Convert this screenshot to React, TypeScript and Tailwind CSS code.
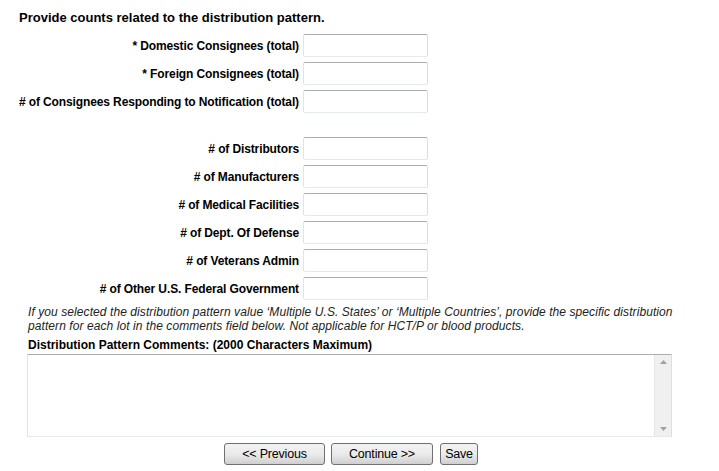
import React from 'react';

const topFields = [
  '* Domestic Consignees (total)',
  '* Foreign Consignees (total)',
  '# of Consignees Responding to Notification (total)',
];

const countFields = [
  '# of Distributors',
  '# of Manufacturers',
  '# of Medical Facilities',
  '# of Dept. Of Defense',
  '# of Veterans Admin',
  '# of Other U.S. Federal Government',
];

function FieldRow({ label }: { label: string }) {
  return (
    <div className="flex items-center h-[23px]">
      <label className="w-[284px] shrink-0 whitespace-nowrap text-right pr-[4px] text-[12px] font-bold text-black leading-none tracking-[-0.12px]">{label}</label>
      <input
        type="text"
        className="w-[125px] h-[23px] bg-white rounded-[2px] border border-t-[#abadb3] border-l-[#e2e3ea] border-r-[#dbdfe6] border-b-[#e3e9ef] outline-none px-1 text-[12px]"
      />
    </div>
  );
}

function Btn({ children, w }: { children: React.ReactNode; w: string }) {
  return (
    <button
      className={`${w} h-[22px] shrink-0 rounded-[3px] border border-[#707070] bg-gradient-to-b from-[#f2f2f2] via-[#ebebeb] to-[#cfcfcf] text-[12.5px] text-black leading-none tracking-[-0.2px]`}
    >
      {children}
    </button>
  );
}

export default function App() {
  return (
    <div className="w-[719px] h-[471px] bg-white font-['Liberation_Sans',Arial,sans-serif] text-black overflow-hidden">
      <div className="pl-[19px] pt-[10px]">
        <h2 className="text-[13px] font-bold leading-[15px]">Provide counts related to the distribution pattern.</h2>
      </div>

      <div className="flex flex-col gap-[5px] pl-[19px] mt-[9px]">
        {topFields.map((f) => (
          <FieldRow key={f} label={f} />
        ))}
        <div className="h-[14px]" />
        {countFields.map((f) => (
          <FieldRow key={f} label={f} />
        ))}
      </div>

      <div className="pl-[28px] mt-[5px]">
        <p className="italic text-[12px] leading-[14px] text-[#222] whitespace-nowrap tracking-[0.08px]">
          If you selected the distribution pattern value ‘Multiple U.S. States’ or ‘Multiple Countries’, provide the specific distribution
          <br />
          pattern for each lot in the comments field below. Not applicable for HCT/P or blood products.
        </p>
        <p className="font-bold text-[12px] leading-[15px] mt-[5px]">Distribution Pattern Comments: (2000 Characters Maximum)</p>
      </div>

      <div className="ml-[27px] mt-[1px] w-[645px] h-[83px] flex border border-t-[#abadb3] border-l-[#e2e3ea] border-r-[#dbdfe6] border-b-[#e3e9ef] bg-white">
        <textarea className="flex-1 resize-none outline-none p-1 text-[12px]" />
        <div className="w-[17px] bg-[#f0f0f0] border-l border-[#e6e6e6] flex flex-col items-center justify-between py-[5px]">
          <svg width="7" height="4" viewBox="0 0 7 4"><path d="M0 4 L3.5 0 L7 4 Z" fill="#a3a3a3" /></svg>
          <svg width="7" height="4" viewBox="0 0 7 4"><path d="M0 0 L3.5 4 L7 0 Z" fill="#a3a3a3" /></svg>
        </div>
      </div>

      <div className="flex mt-[6px] pl-[224px]">
        <Btn w="w-[101px]">&lt;&lt; Previous</Btn>
        <div className="w-[6px] shrink-0" />
        <Btn w="w-[102px]">Continue &gt;&gt;</Btn>
        <div className="w-[7px] shrink-0" />
        <Btn w="w-[38px]">Save</Btn>
      </div>
    </div>
  );
}
